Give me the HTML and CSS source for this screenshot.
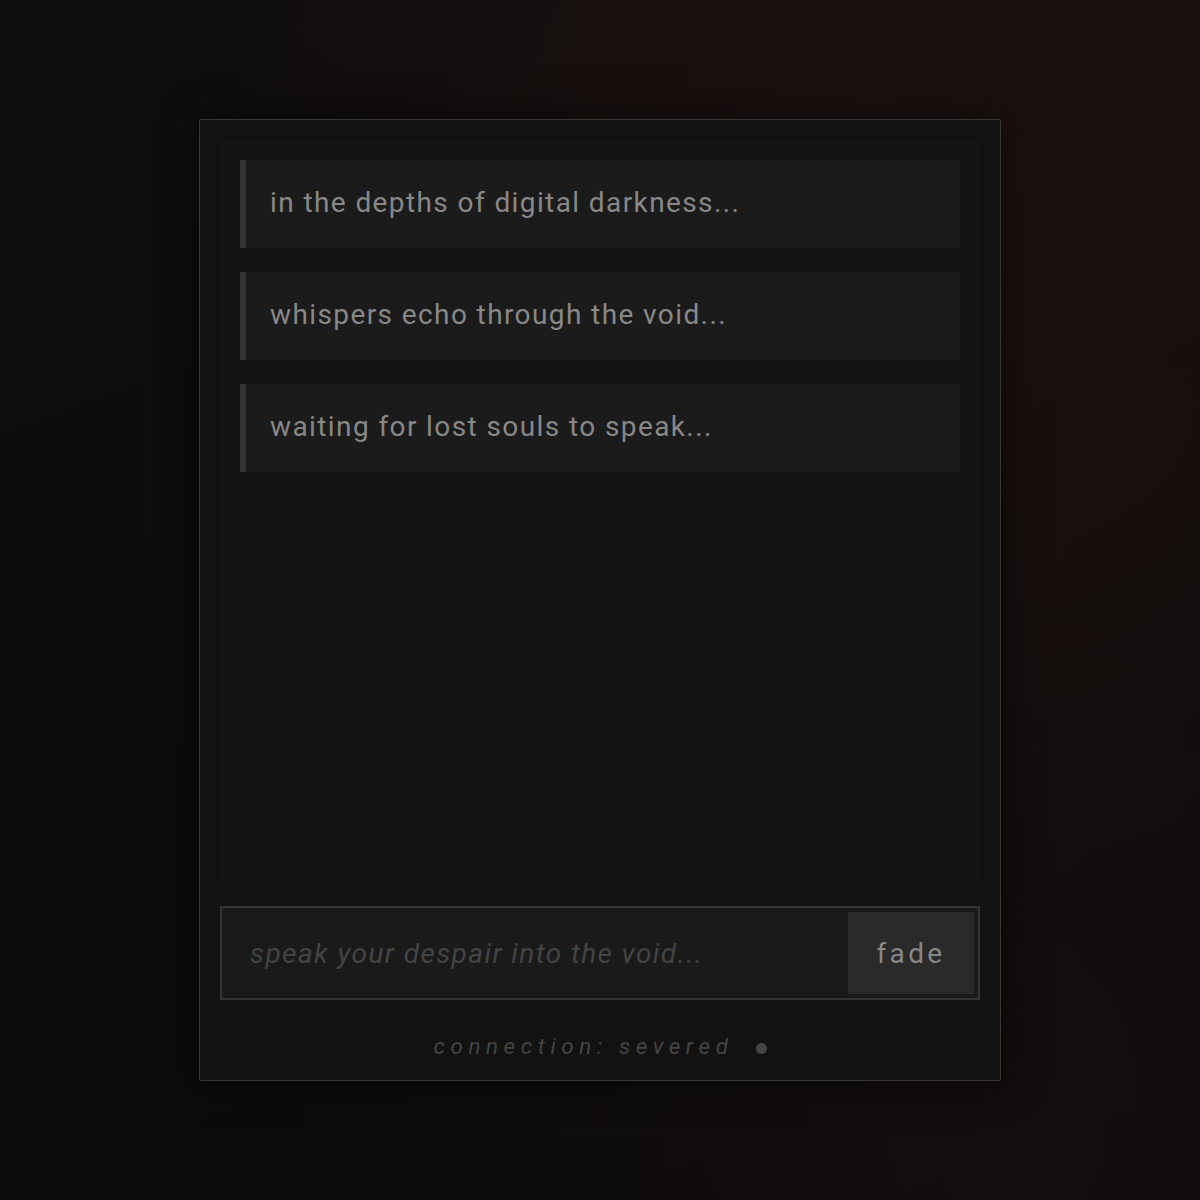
FILE: index.html
```html
<!DOCTYPE html>
<html lang="en">
<head>
    <meta charset="UTF-8">
    <meta name="viewport" content="width=device-width, initial-scale=1.0">
    <title>the void</title>
    <link rel="stylesheet" href="styles.css">
</head>
<body>

<div class="void-box">
    <div class="messages">
        <div class="message">in the depths of digital darkness...</div>
        <div class="message">whispers echo through the void...</div>
        <div class="message">waiting for lost souls to speak...</div>
    </div>

    <form class="input-row">
        <input type="text" placeholder="speak your despair into the void...">
        <button type="button">fade</button>
    </form>

    <div class="status">
        <span>connection: severed</span>
        <span class="dot"></span>
    </div>
</div>

</body>
</html>
```

FILE: styles.css
```css
html, body {
    height: 100%;
}
body {
    margin: 0;
    font-family: Roboto, "Liberation Sans", sans-serif;
    background:
        radial-gradient(ellipse at 78% 15%, rgba(42, 22, 18, 0.55), transparent 55%),
        radial-gradient(ellipse at 85% 95%, rgba(30, 20, 16, 0.4), transparent 50%),
        linear-gradient(160deg, #100e0e 0%, #0d0c0c 60%, #0b0b0b 100%);
    display: flex;
    justify-content: center;
    align-items: flex-start;
}
.void-box {
    box-sizing: border-box;
    width: 802px;
    height: 962px;
    margin-top: 119px;
    background-color: #121212;
    border: 1px solid #363636;
    border-radius: 2px;
    padding: 20px 20px 0;
    display: flex;
    flex-direction: column;
    box-shadow: 0 0 40px rgba(0, 0, 0, 0.6);
}
.messages {
    flex: 1;
    background-color: #141414;
    padding: 20px;
    display: flex;
    flex-direction: column;
    gap: 24px;
}
.message {
    background-color: #1b1b1b;
    border-left: 6px solid #333;
    padding: 23px 24px 25px;
    color: #888;
    font-size: 28px;
    line-height: 40px;
    letter-spacing: 0.05em;
}
.input-row {
    margin: 20px 0 0;
    display: flex;
    border: 2px solid #333;
    background-color: #1a1a1a;
    padding: 4px;
    height: 94px;
    box-sizing: border-box;
}
.input-row input {
    flex: 1;
    min-width: 0;
    background: transparent;
    border: none;
    outline: none;
    padding: 0 24px;
    font-family: Roboto, "Liberation Sans", sans-serif;
    font-size: 28px;
    font-style: italic;
    letter-spacing: 0.05em;
    color: #888;
}
.input-row input::placeholder {
    color: #444;
}
.input-row button {
    width: 126px;
    background-color: #2a2a2a;
    border: none;
    color: #888;
    font-family: Roboto, "Liberation Sans", sans-serif;
    font-size: 28px;
    letter-spacing: 3.4px;
    cursor: pointer;
}
.status {
    flex: 0 0 80px;
    box-sizing: border-box;
    padding-top: 12px;
    display: flex;
    justify-content: center;
    align-items: center;
    gap: 22px;
    color: #444;
    font-size: 22.4px;
    font-style: italic;
    letter-spacing: 5.6px;
}
.dot {
    width: 11px;
    height: 11px;
    border-radius: 50%;
    background-color: #444;
    margin-top: 4px;
}
```
